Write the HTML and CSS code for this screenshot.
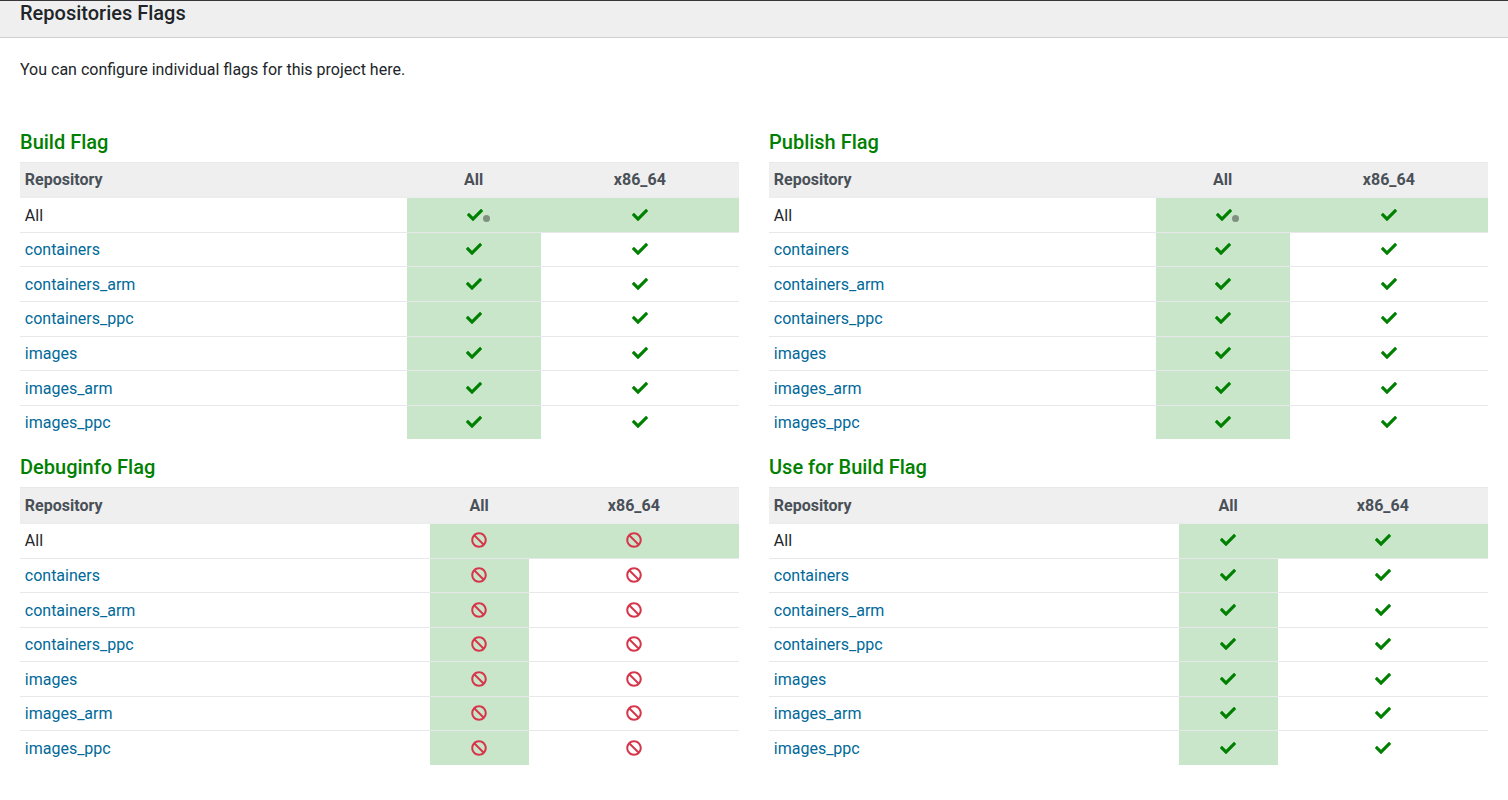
FILE: index.html
```
<!DOCTYPE html>
<html lang="en">
<head>
<meta charset="utf-8">
<title>Repositories Flags</title>
<link rel="stylesheet" href="styles.css">
</head>
<body>
<svg class="sprite" aria-hidden="true">
  <symbol id="check" viewBox="0 0 512 512"><path d="M173.898 439.404l-166.4-166.4c-9.997-9.997-9.997-26.206 0-36.204l36.203-36.204c9.997-9.998 26.207-9.998 36.204 0L192 312.69 432.095 72.596c9.997-9.997 26.207-9.997 36.204 0l36.203 36.204c9.997 9.997 9.997 26.206 0 36.204l-294.4 294.401c-9.998 9.997-26.207 9.997-36.204-.001z"/></symbol>
  <symbol id="ban" viewBox="0 0 512 512"><path d="M256 8C119.034 8 8 119.033 8 256s111.034 248 248 248 248-111.034 248-248S392.967 8 256 8zm130.108 117.892c65.448 65.448 70 165.481 20.677 235.637L150.47 105.216c70.204-49.356 170.226-44.735 235.638 20.676zM125.892 386.108c-65.448-65.448-70-165.481-20.677-235.637L361.53 406.784c-70.203 49.356-170.226 44.735-235.638-20.676z"/></symbol>
</svg>
<header class="card-header"><h1 class="heading">Repositories Flags</h1></header>
<main class="card-body">
  <p class="intro">You can configure individual flags for this project here.</p>
  <div class="flags" id="flags"></div>
</main>
<script src="flags.js"></script>
</body>
</html>
```
FILE: styles.css
```
* { box-sizing: border-box; }
body {
  margin: 0;
  font: 400 16px/24px Roboto, sans-serif;
  color: #212529;
  background: #fff;
}
.sprite { display: none; }
.card-header {
  height: 38px;
  border-top: 1px solid #38363a;
  border-bottom: 1px solid #cfcfcf;
  background: #efefef;
  padding: 0 20px;
}
.heading { margin: 0; font-size: 20px; line-height: 24px; font-weight: 500; }
.card-body { padding: 20px; }
.intro { margin: 0; padding-bottom: 48px; }
.flags { display: grid; grid-template-columns: 1fr 1fr; column-gap: 30px; }
.title { margin: 0; padding-bottom: 7.7px; font-size: 20px; line-height: 24px; font-weight: 500; color: #008000; }
.flag-table {
  width: 100%;
  margin-bottom: 16px;
  table-layout: fixed;
  border-collapse: collapse;
}
.flag-table.narrow { margin-top: .3px; }
.flag-table th, .flag-table td {
  padding: 5.3px 4.8px 4.3px;
  border-top: 1px solid #e6e8e9;
  text-align: center;
  vertical-align: top;
}
.flag-table.narrow td { padding-top: 5.4px; padding-bottom: 4.2px; }
.flag-table th {
  padding: 5px 4.8px 4.6px;
  background: #efefef;
  color: #495057;
  font-weight: 700;
  border-bottom: 2px solid #ebedee;
}
.flag-table.narrow th { padding-top: 5.5px; padding-bottom: 4.1px; }
.flag-table th:first-child, .flag-table td:first-child { text-align: left; }
.wide .name-col { width: 386.6px; }
.wide .all-col { width: 134.1px; }
.narrow .name-col { width: 409.6px; }
.narrow .all-col { width: 99.1px; }
.flag-table .default { background: #cae6ca; }
.link { color: #006999; text-decoration: none; }
.icon { width: 16px; height: 16px; vertical-align: -2px; }
.narrow .icon { margin-left: -.6px; }
.enabled { fill: #008000; }
.disabled { fill: #d6364a; }
.dot {
  display: inline-block;
  width: 7px;
  height: 7px;
  margin-right: -7px;
  border-radius: 50%;
  background: #7f9080;
  vertical-align: -1px;
}
.icon:has(+ .dot) { margin-left: 2px; }
```
FILE: flags.js
```
const repositories = ['All', 'containers', 'containers_arm', 'containers_ppc', 'images', 'images_arm', 'images_ppc'];
const flags = [
  { title: 'Build Flag', enabled: true, explicit: true },
  { title: 'Publish Flag', enabled: true, explicit: true },
  { title: 'Debuginfo Flag', enabled: false, explicit: false },
  { title: 'Use for Build Flag', enabled: true, explicit: false },
];

document.getElementById('flags').innerHTML = flags.map(flag => {
  const icon = `<svg class="icon ${flag.enabled ? 'enabled' : 'disabled'}"><use href="#${flag.enabled ? 'check' : 'ban'}"/></svg>`;
  const rows = repositories.map((name, i) => `<tr>
    <td>${i ? `<a class="link" href="#">${name}</a>` : name}</td>
    <td class="default">${icon}${!i && flag.explicit ? '<span class="dot"></span>' : ''}</td>
    <td class="${i ? '' : 'default'}">${icon}</td></tr>`).join('');
  return `<section>
    <h2 class="title">${flag.title}</h2>
    <table class="flag-table ${flag.explicit ? 'wide' : 'narrow'}">
      <colgroup><col class="name-col"><col class="all-col"><col></colgroup>
      <thead><tr><th>Repository</th><th>All</th><th>x86_64</th></tr></thead>
      <tbody>${rows}</tbody>
    </table></section>`;
}).join('');
```
